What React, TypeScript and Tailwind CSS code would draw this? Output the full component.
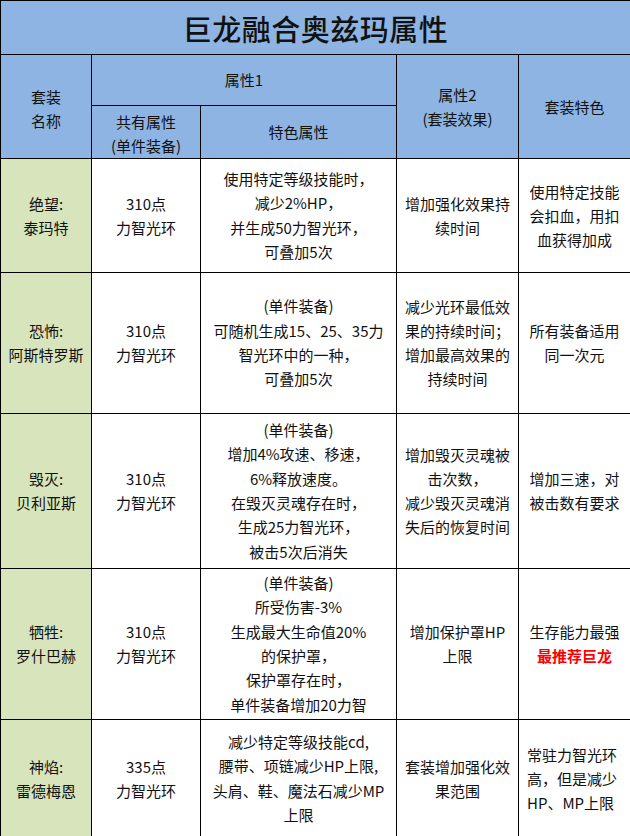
import React from "react";

type Row = {
  name: string[];
  base: string[];
  special: string[];
  set: string[];
  feature: React.ReactNode;
  height: string;
  featureLeft?: boolean;
};

const rows: Row[] = [
  {
    name: ["绝望:", "泰玛特"],
    base: ["310点", "力智光环"],
    special: ["使用特定等级技能时，", "减少2%HP，", "并生成50力智光环，", "可叠加5次"],
    set: ["增加强化效果持", "续时间"],
    feature: (
      <>
        使用特定技能
        <br />
        会扣血，用扣
        <br />
        血获得加成
      </>
    ),
    height: "h-[114px]",
  },
  {
    name: ["恐怖:", "阿斯特罗斯"],
    base: ["310点", "力智光环"],
    special: ["(单件装备)", "可随机生成15、25、35力", "智光环中的一种，", "可叠加5次"],
    set: ["减少光环最低效", "果的持续时间；", "增加最高效果的", "持续时间"],
    feature: (
      <>
        所有装备适用
        <br />
        同一次元
      </>
    ),
    height: "h-[141px]",
  },
  {
    name: ["毁灭:", "贝利亚斯"],
    base: ["310点", "力智光环"],
    special: [
      "(单件装备)",
      "增加4%攻速、移速，",
      "6%释放速度。",
      "在毁灭灵魂存在时，",
      "生成25力智光环，",
      "被击5次后消失",
    ],
    set: ["增加毁灭灵魂被", "击次数，", "减少毁灭灵魂消", "失后的恢复时间"],
    feature: (
      <>
        增加三速，对
        <br />
        被击数有要求
      </>
    ),
    height: "h-[155px]",
  },
  {
    name: ["牺牲:", "罗什巴赫"],
    base: ["310点", "力智光环"],
    special: [
      "(单件装备)",
      "所受伤害-3%",
      "生成最大生命值20%",
      "的保护罩，",
      "保护罩存在时，",
      "单件装备增加20力智",
    ],
    set: ["增加保护罩HP", "上限"],
    feature: (
      <>
        生存能力最强
        <br />
        <span className="font-bold text-[#ff0000]">最推荐巨龙</span>
      </>
    ),
    height: "h-[151px]",
  },
  {
    name: ["神焰:", "雷德梅恩"],
    base: ["335点", "力智光环"],
    special: ["减少特定等级技能cd,", "腰带、项链减少HP上限,", "头肩、鞋、魔法石减少MP", "上限"],
    set: ["套装增加强化效", "果范围"],
    feature: (
      <>
        常驻力智光环
        <br />
        高，但是减少
        <br />
        HP、MP上限
      </>
    ),
    height: "h-[118px]",
    featureLeft: true,
  },
];

const Lines = ({ lines }: { lines: string[] }) => (
  <>
    {lines.map((l, i) => (
      <React.Fragment key={i}>
        {i > 0 && <br />}
        {l}
      </React.Fragment>
    ))}
  </>
);

const cell = "border border-black px-1 text-center align-middle whitespace-nowrap";

export default function App() {
  return (
    <div className="w-[630px] h-[836px] bg-white font-['Noto_Sans_CJK_SC',sans-serif] text-[15px] leading-[24px] text-[#111]">
      <table className="w-[630px] table-fixed border-collapse">
        <colgroup>
          <col className="w-[91px]" />
          <col className="w-[109px]" />
          <col className="w-[196px]" />
          <col className="w-[122px]" />
          <col className="w-[112px]" />
        </colgroup>
        <thead className="bg-[#8db4e2]">
          <tr className="h-[54px]">
            <th colSpan={5} className={`${cell} text-[29px] font-medium leading-[40px] tracking-[0.5px]`}>
              巨龙融合奥兹玛属性
            </th>
          </tr>
          <tr className="h-[51px]">
            <th rowSpan={2} className={`${cell} font-normal pt-1`}>
              套装
              <br />
              名称
            </th>
            <th colSpan={2} className={`${cell} font-normal`}>
              属性1
            </th>
            <th rowSpan={2} className={`${cell} font-normal`}>
              属性2
              <br />
              (套装效果)
            </th>
            <th rowSpan={2} className={`${cell} font-normal`}>
              套装特色
            </th>
          </tr>
          <tr className="h-[51px]">
            <th className={`${cell} font-normal pt-1`}>
              共有属性
              <br />
              (单件装备)
            </th>
            <th className={`${cell} font-normal`}>特色属性</th>
          </tr>
        </thead>
        <tbody>
          {rows.map((r) => (
            <tr key={r.name[1]} className={r.height}>
              <td className={`${cell} bg-[#d8e4bc]`}>
                <Lines lines={r.name} />
              </td>
              <td className={cell}>
                <Lines lines={r.base} />
              </td>
              <td className={`${cell} leading-[24.4px]`}>
                <Lines lines={r.special} />
              </td>
              <td className={cell}>
                <Lines lines={r.set} />
              </td>
              <td className={r.featureLeft ? `${cell} text-left pl-2` : cell}>{r.feature}</td>
            </tr>
          ))}
        </tbody>
      </table>
    </div>
  );
}
